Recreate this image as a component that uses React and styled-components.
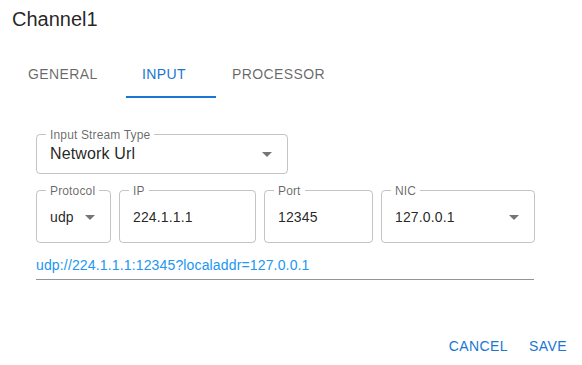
import styled, { createGlobalStyle } from "styled-components";

const GlobalStyle = createGlobalStyle`
  body {
    margin: 0;
    background: #fff;
    font-family: "Liberation Sans", Arial, sans-serif;
    color: rgba(0, 0, 0, 0.87);
  }
`;

const PRIMARY = "#1976d2";

const TABS = [
  { label: "General", width: 114 },
  { label: "Input", width: 90, active: true },
  { label: "Processor", width: 124 },
];

function ArrowDrop() {
  return (
    <Arrow viewBox="0 0 24 24" aria-hidden="true">
      <path d="M7 10l5 5 5-5z" />
    </Arrow>
  );
}

function Field({ label, value, width, tall, select }) {
  return (
    <Box $width={width} $tall={tall}>
      <Label>{label}</Label>
      <Value $tall={tall}>{value}</Value>
      {select && <ArrowDrop />}
    </Box>
  );
}

export default function App() {
  return (
    <Page>
      <GlobalStyle />
      <Title>Channel1</Title>
      <TabBar>
        {TABS.map((tab) => (
          <Tab key={tab.label} $width={tab.width} $active={tab.active}>
            {tab.label}
          </Tab>
        ))}
      </TabBar>
      <Content>
        <Field label="Input Stream Type" value="Network Url" width={252} select />
        <Row>
          <Field label="Protocol" value="udp" width={75} tall select />
          <Field label="IP" value="224.1.1.1" width={137} tall />
          <Field label="Port" value="12345" width={109} tall />
          <Field label="NIC" value="127.0.0.1" width={154} tall select />
        </Row>
        <UrlField>udp://224.1.1.1:12345?localaddr=127.0.0.1</UrlField>
      </Content>
      <Actions>
        <TextButton>Cancel</TextButton>
        <TextButton>Save</TextButton>
      </Actions>
    </Page>
  );
}

const Page = styled.div`
  width: 582px;
  height: 365px;
  display: flex;
  flex-direction: column;
  overflow: hidden;
`;

const Title = styled.h2`
  margin: 0;
  padding: 7px 12px 19px;
  font-size: 20px;
  line-height: 24px;
  font-weight: 400;
  color: rgba(0, 0, 0, 0.87);
`;

const TabBar = styled.div`
  display: flex;
  padding-left: 12px;
  height: 48px;
`;

const Tab = styled.div`
  width: ${(p) => p.$width}px;
  box-sizing: border-box;
  padding-left: 16px;
  display: flex;
  align-items: center;
  font-size: 14px;
  font-weight: 400;
  letter-spacing: 0.02857em;
  text-transform: uppercase;
  color: ${(p) => (p.$active ? PRIMARY : "rgba(0, 0, 0, 0.6)")};
  box-shadow: ${(p) => (p.$active ? `inset 0 -2px 0 ${PRIMARY}` : "none")};
`;

const Content = styled.div`
  display: flex;
  flex-direction: column;
  align-items: flex-start;
  padding: 36px 0 0 36px;
  letter-spacing: 0.15px;
`;

const Row = styled.div`
  display: flex;
  gap: 8px;
  margin-top: 16px;
`;

const Box = styled.div`
  position: relative;
  box-sizing: border-box;
  width: ${(p) => p.$width}px;
  height: ${(p) => (p.$tall ? 53 : 40)}px;
  border: 1px solid rgba(0, 0, 0, 0.23);
  border-radius: 4px;
  display: flex;
  align-items: center;
  padding-left: 13px;
`;

const Label = styled.span`
  position: absolute;
  top: -6px;
  left: 9px;
  padding: 0 4px;
  background: #fff;
  font-size: 12px;
  line-height: 12px;
  color: rgba(0, 0, 0, 0.6);
  white-space: nowrap;
`;

const Value = styled.span`
  flex: 1;
  font-size: ${(p) => (p.$tall ? 14 : 16)}px;
  line-height: 20px;
  color: rgba(0, 0, 0, 0.87);
  white-space: nowrap;
`;

const Arrow = styled.svg`
  width: 24px;
  height: 24px;
  flex: none;
  margin-right: 8px;
  fill: rgba(0, 0, 0, 0.54);
`;

const UrlField = styled.div`
  box-sizing: border-box;
  width: 498px;
  margin-top: 12px;
  padding-bottom: 4px;
  border-bottom: 1px solid rgba(0, 0, 0, 0.42);
  font-size: 14px;
  line-height: 20px;
  color: #2196f3;
`;

const Actions = styled.div`
  display: flex;
  justify-content: flex-end;
  padding: 0 2px 0 0;
  margin-top: 48px;
`;

const TextButton = styled.button`
  min-width: 64px;
  padding: 6px 8px;
  border: 0;
  background: none;
  font-family: inherit;
  font-size: 14px;
  font-weight: 400;
  line-height: 24.5px;
  letter-spacing: 0.02857em;
  text-transform: uppercase;
  color: ${PRIMARY};
  cursor: pointer;
`;
